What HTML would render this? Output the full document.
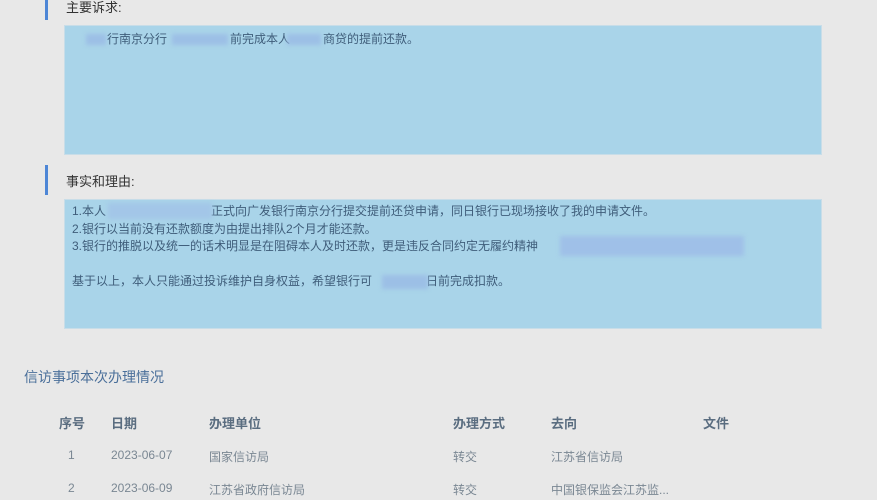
<!DOCTYPE html>
<html><head><meta charset="utf-8"><style>
body{margin:0;width:877px;height:500px;background:#e8e8e8;font-family:"Liberation Sans","Noto Sans CJK SC",sans-serif;overflow:hidden;position:relative;color:#555}
.a{position:absolute;white-space:nowrap}
.bar{position:absolute;left:45px;width:3px;background:#4d86d6}
.lab{font-size:13px;color:#333}
.ta{position:absolute;left:64px;width:758px;background:#a9d4e9;border:1px solid #c8dde8;box-sizing:border-box}
.t{font-size:12px;color:#3f5d7a;line-height:17.5px}
.sp{display:inline-block}
.blob{position:absolute;background:#9cbfe6;filter:blur(2px)}
.th{font-size:13px;font-weight:bold;color:#5a6d80}
.td{font-size:12px;color:#7a8793}
</style></head><body>
<div class="bar" style="top:0;height:20px"></div>
<div class="a lab" style="left:66px;top:-3px">主要诉求:</div>
<div class="ta" style="top:25px;height:130px"></div>
<div class="a t" style="left:66px;top:31px"><span class="sp" style="width:41px"></span>行南京分行<span class="sp" style="width:63px"></span>前完成本人<span class="sp" style="width:33px"></span>商贷的提前还款。</div>
<div class="blob" style="left:86px;top:34px;width:20px;height:11px"></div>
<div class="blob" style="left:172px;top:34px;width:56px;height:11px"></div>
<div class="blob" style="left:287px;top:34px;width:34px;height:11px"></div>
<div class="bar" style="top:165px;height:30px"></div>
<div class="a lab" style="left:66px;top:171px">事实和理由:</div>
<div class="ta" style="top:199px;height:130px"></div>
<div class="a t" style="left:72px;top:203px">1.本人<span class="sp" style="width:105px"></span>正式向广发银行南京分行提交提前还贷申请，同日银行已现场接收了我的申请文件。<br>2.银行以当前没有还款额度为由提出排队2个月才能还款。<br>3.银行的推脱以及统一的话术明显是在阻碍本人及时还款，更是违反合同约定无履约精神<br><br>基于以上，本人只能通过投诉维护自身权益，希望银行可<span class="sp" style="width:54px"></span>日前完成扣款。</div>
<div class="blob" style="left:108px;top:203px;width:104px;height:16px;background:#a3c6e8"></div>
<div class="blob" style="left:560px;top:236px;width:184px;height:20px;background:#9fc0e8"></div>
<div class="blob" style="left:382px;top:275px;width:46px;height:14px"></div>
<div class="a" style="left:24px;top:367px;font-size:14px;color:#4a6f9a">信访事项本次办理情况</div>
<div class="a th" style="left:59px;top:413px">序号</div>
<div class="a th" style="left:111px;top:413px">日期</div>
<div class="a th" style="left:209px;top:413px">办理单位</div>
<div class="a th" style="left:453px;top:413px">办理方式</div>
<div class="a th" style="left:551px;top:413px">去向</div>
<div class="a th" style="left:703px;top:413px">文件</div>
<div class="a td" style="left:68px;top:448px">1</div>
<div class="a td" style="left:111px;top:448px">2023-06-07</div>
<div class="a td" style="left:209px;top:448px">国家信访局</div>
<div class="a td" style="left:453px;top:448px">转交</div>
<div class="a td" style="left:551px;top:448px">江苏省信访局</div>
<div class="a td" style="left:68px;top:481px">2</div>
<div class="a td" style="left:111px;top:481px">2023-06-09</div>
<div class="a td" style="left:209px;top:481px">江苏省政府信访局</div>
<div class="a td" style="left:453px;top:481px">转交</div>
<div class="a td" style="left:551px;top:481px">中国银保监会江苏监...</div>
</body></html>
